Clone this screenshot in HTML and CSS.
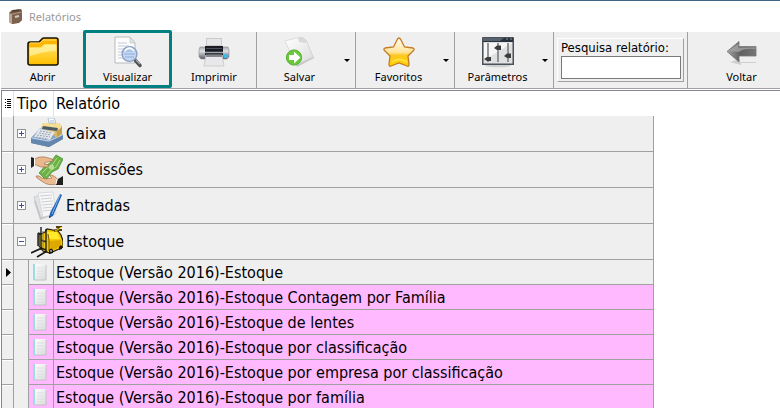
FILE: index.html
```html
<!DOCTYPE html>
<html lang="pt-BR">
<head>
<meta charset="utf-8">
<title>Relatórios</title>
<meta name="viewport" content="width=device-width, initial-scale=1">
<link rel="stylesheet" href="styles.css">
</head>
<body>
<svg class="defs" aria-hidden="true">
  <defs>
    <linearGradient id="gFolder" x1="0" y1="0" x2="0" y2="1"><stop offset="0" stop-color="#ffe36b"/><stop offset="1" stop-color="#ffc000"/></linearGradient>
    <linearGradient id="gStar" x1="0" y1="0" x2="0" y2="1"><stop offset="0" stop-color="#fffdf5"/><stop offset=".5" stop-color="#ffe59a"/><stop offset=".62" stop-color="#fdc81e"/><stop offset="1" stop-color="#ffd200"/></linearGradient>
    <linearGradient id="gPaper" x1="0" y1="0" x2="1" y2="1"><stop offset="0" stop-color="#ffffff"/><stop offset="1" stop-color="#dcdcdc"/></linearGradient>
    <linearGradient id="gMetal" x1="0" y1="0" x2="0" y2="1"><stop offset="0" stop-color="#a9abb3"/><stop offset=".35" stop-color="#dfe0e4"/><stop offset="1" stop-color="#565863"/></linearGradient>
    <linearGradient id="gArrow" x1="0" y1="0" x2="1" y2="0"><stop offset="0" stop-color="#a5a5a5"/><stop offset=".45" stop-color="#5f5f5f"/><stop offset="1" stop-color="#777"/></linearGradient>
    <linearGradient id="gTray" x1="0" y1="0" x2="0" y2="1"><stop offset="0" stop-color="#a9c6e4"/><stop offset="1" stop-color="#56799f"/></linearGradient>
    <symbol id="sheet" viewBox="0 0 14 17">
      <path d="M0 0H13V16H0Z" fill="url(#gPaper)"/><path d="M13 1V16H1" fill="none" stroke="#c0c2c4"/><path d="M1 0V16" stroke="#9fdce2" stroke-width="2"/><path d="M4 4H11M4 7H11M4 10H11M4 13H11" stroke="#dcdedf"/>
    </symbol>
  </defs>
</svg>

<header class="titlebar">
  <svg class="app-icon" viewBox="0 0 15 16" aria-hidden="true">
    <path d="M1 4L4 1L13 0L14 2V11L11 14L4 15L1 13Z" fill="#6d5445"/><path d="M4 5L14 3V11L11 13L4 15Z" fill="#7d6252"/><path d="M1 4L4 5V15L1 13Z" fill="#c0a68f"/><path d="M4 5L14 3" stroke="#b3987f"/><path d="M7 8L11 7" stroke="#d5cabd" stroke-width="2"/><path d="M5 2L11 1" stroke="#46342a"/>
  </svg>
  <h1 class="title">Relatórios</h1>
</header>

<nav class="toolbar" aria-label="Ferramentas">
  <button class="tool" type="button">
    <svg class="tool-icon" viewBox="0 0 32 32" aria-hidden="true">
      <path d="M1 7Q1 5 3 5H12L15 2Q15 1 17 1H29Q31 1 31 3V26Q31 28 29 28H3Q1 28 1 26Z" fill="#ffb400" stroke="#171300" stroke-width="1.6"/>
      <path d="M2 11Q2 10 4 10H13Q15 10 16 8Q17 7 19 7H28Q30 7 30 9V25Q30 27 28 27H4Q2 27 2 25Z" fill="url(#gFolder)"/>
      <path d="M3 11H14L18 8H29V14Q18 14 3 19Z" fill="#fff3a8" opacity=".7"/><path d="M3 6H13L16 3H29" fill="none" stroke="#ffe16b"/>
    </svg>
    <span>Abrir</span>
  </button>
  <button class="tool tool-active" type="button">
    <svg class="tool-icon" viewBox="0 0 32 32" aria-hidden="true">
      <path d="M3 0H18L23 6V26H3Z" fill="#fcfcfc" stroke="#b5b9bc"/><path d="M18 0V6H23Z" fill="#e2e5e7" stroke="#bfc3c6" stroke-width=".7"/>
      <path d="M6 6H15M6 9H17M6 12H12M6 15H10M6 18H10M6 21H12" stroke="#c3cad8"/>
      <path d="M23 23L28 28.500" stroke="#4f5359" stroke-width="3.500" stroke-linecap="round"/><path d="M24 23L28 27" stroke="#a6a9ad" stroke-width="1.2"/>
      <circle cx="17.500" cy="17" r="7.400" fill="#c3d8f4" stroke="#8a9fc0" stroke-width="1.4"/><path d="M13 14H22M12 17H23M13 20H22" stroke="#91aed6"/><path d="M13 14Q17 8 22 14" fill="none" stroke="#fff" stroke-width="1.5"/>
    </svg>
    <span>Visualizar</span>
  </button>
  <button class="tool tool-print" type="button">
    <svg class="tool-icon" viewBox="0 0 32 32" aria-hidden="true">
      <path d="M8 1H24V12H8Z" fill="#c9cacd"/><path d="M9 2H23V8H9Z" fill="#e6e6e8"/>
      <path d="M2 10H30L31 13V20L29 22H3L1 20V13Z" fill="url(#gMetal)" stroke="#8b8e96" stroke-width=".6"/>
      <path d="M7 9H25V18H7Z" fill="#1a1b22"/><path d="M8 11.500H24" stroke="#4b4d58"/><path d="M7 15.500H25" stroke="#a3a5ad" stroke-width="1.500"/><path d="M26 17H30V21H26Z" fill="#45b7e7"/>
      <path d="M8 18H24L26 29H6Z" fill="#e8e8ea" stroke="#c5c6c9" stroke-width=".8"/><path d="M8 18H24V20H8Z" fill="#84868e"/>
    </svg>
    <span>Imprimir</span>
  </button>
  <div class="split">
    <button class="tool" type="button">
      <svg class="tool-icon" viewBox="0 0 32 32" aria-hidden="true">
        <path d="M2 5L18 0L22 3L30 21L13 30Z" fill="#c4c5c5"/><path d="M1 4L16 0L22 3L29 20L12 28Z" fill="url(#gPaper)" stroke="#d2d3d3" stroke-width=".7"/><path d="M14 1L16 0L22 3V6L15 5Z" fill="#d4dade"/>
        <circle cx="10" cy="20.500" r="7.600" fill="#67c93a" stroke="#55b030"/><path d="M5 18H10V14.500L16.500 20.500L10 26.500V23H5Z" fill="#fff"/>
      </svg>
      <span>Salvar</span>
    </button>
    <button class="drop" type="button" aria-label="Opções de salvar"></button>
  </div>
  <div class="split">
    <button class="tool" type="button">
      <svg class="tool-icon" viewBox="0 0 32 32" aria-hidden="true">
        <path d="M16 1Q17 1 18 3L21.500 10L30 11Q32 12 30.500 13.500L25 19L26 27Q26 30 24 29L16 26L8 29Q6 30 6 27L7 19L1.500 13.500Q0 12 2 11L10.500 10L14 3Q15 1 16 1Z" fill="url(#gStar)" stroke="#c47a24" stroke-width="1.300"/>
        <path d="M9 25Q16 20 24 25" fill="none" stroke="#ffe94c" stroke-width="1.500"/>
      </svg>
      <span>Favoritos</span>
    </button>
    <button class="drop" type="button" aria-label="Opções de favoritos"></button>
  </div>
  <div class="split">
    <button class="tool" type="button">
      <svg class="tool-icon" viewBox="0 0 32 32" aria-hidden="true">
        <ellipse cx="16" cy="28.500" rx="13" ry="1.800" fill="#cfcfcf"/>
        <path d="M0 1Q0 0 1 0H31Q32 0 32 1V28H0Z" fill="#4b5159"/><path d="M1.500 5H30.500V26.500H1.500Z" fill="#dfe0e2"/><path d="M2 6H30L2 23Z" fill="#f6f6f6"/><path d="M1 1H31V5H1Z" fill="#29323c"/><path d="M1 1H22L18 4H1Z" fill="#58636f"/><path d="M24 2H26M28 2H30" stroke="#8c96a0"/>
        <path d="M6 6V25M16 6V25M26 6V25" stroke="#777" stroke-width="1.500"/><path d="M2 22L5 20H9V24H5ZM12 11L15 8.500H19V13H15ZM22 19L25 16.500H29V21H25Z" fill="#3d3d3d"/>
      </svg>
      <span>Parâmetros</span>
    </button>
    <button class="drop" type="button" aria-label="Opções de parâmetros"></button>
  </div>
  <div class="search">
    <div class="search-frame">
      <label for="pesquisa">Pesquisa relatório:</label>
      <input id="pesquisa" type="text">
    </div>
  </div>
  <button class="tool tool-back" type="button">
    <svg class="tool-icon" viewBox="0 0 32 32" aria-hidden="true">
      <path d="M4 25L14 22V25H30V26H15V28Z" fill="#cfcfcf"/>
      <path d="M1 14.500L13 4.500V9.500H30V19H13V25Z" fill="url(#gArrow)" stroke="#777" stroke-width=".8"/><path d="M3 14L12.500 6.500V10.500H29.500V12Q18 11 13 15Z" fill="#aaa" opacity=".7"/>
    </svg>
    <span>Voltar</span>
  </button>
</nav>

<main class="grid">
  <table class="reports">
    <colgroup><col class="c-mark"><col class="c-indent"><col class="c-type"><col class="c-name"></colgroup>
    <thead>
      <tr>
        <th class="corner"><svg width="8" height="10" viewBox="0 0 8 10" role="img" aria-label="Colunas"><path d="M1 .5H2M1 3.500H2M1 6.500H2M1 8.500H2M3 .5H7M3 2.500H7M3 4.500H7M3 6.500H7M3 8.500H7" stroke="#000"/></svg></th>
        <th class="type-head" colspan="2">Tipo</th>
        <th class="name-head">Relatório</th>
      </tr>
    </thead>
    <tbody>
      <tr class="group">
        <td class="mark"></td>
        <td class="group-cell" colspan="3"><div class="group-line">
          <button class="expander" type="button" aria-label="Expandir Caixa"></button>
          <svg class="group-icon" viewBox="0 0 32 32" aria-hidden="true">
            <path d="M0 20L9 10L31 14L32 21L18 29L0 25Z" fill="url(#gTray)"/><path d="M0 21L18 24L32 17V21L18 29L0 25Z" fill="#6486ad"/><path d="M1 20L18 23L31 17" fill="none" stroke="#c4d9ee"/>
            <path d="M10 10L12 5L28 5L31 8V16L25 20L21 14Z" fill="#d8b867"/><path d="M12 5L28 5L31 8L28 12L10 9Z" fill="#f3dd97"/><path d="M12 8L27 10L26 13L11 11Z" fill="#4c5a66"/><path d="M26 13L31 9V15L26 19Z" fill="#c49f4b"/>
            <path d="M8 11L24 14L19 22L3 19Z" fill="#e3e6ea"/><path d="M9 13L21 15M8 15L20 17M6 17L19 19M5 19L17 21" stroke="#97a5b4" stroke-dasharray="2 1"/>
            <path d="M17 0L23 0L25 5L18 5Z" fill="#fafcff" stroke="#a5b4c5" stroke-width=".8"/><path d="M19 3H23" stroke="#a9bed5"/>
          </svg>
          <span>Caixa</span></div></td>
      </tr>
      <tr class="group">
        <td class="mark"></td>
        <td class="group-cell" colspan="3"><div class="group-line">
          <button class="expander" type="button" aria-label="Expandir Comissões"></button>
          <svg class="group-icon" viewBox="0 0 32 32" aria-hidden="true">
            <path d="M8 19L14 12L19 9L25 1L32 5L27 15L21 18L15 26Z" fill="#6cb247" stroke="#4a9433" stroke-width=".8"/><path d="M11 19L16 14L21 11L26 4M15 22L20 16L25 13L29 6" fill="none" stroke="#afd98d"/><circle cx="20.500" cy="13" r="2.600" fill="#b6dd95"/>
            <path d="M3 5Q9 2 14 3L21 5L22 7L16 8L13 10L18 11L17 13L10 13L5 11L3 10Z" fill="#e9b98e" stroke="#a4714c" stroke-width=".7"/><path d="M0 3L3 4V12L0 14Z" fill="#202020"/><path d="M3.500 4V12" stroke="#fff"/>
            <path d="M5 22Q8 21 11 24L15 25L21 24L18 21Q24 21 27 26L26 30Q17 32 12 28L6 24Z" fill="#ebbb92" stroke="#a4714c" stroke-width=".7"/><path d="M27 25L32 22V31H25Z" fill="#202020"/><path d="M26 25L25 30" stroke="#fff"/>
          </svg>
          <span>Comissões</span></div></td>
      </tr>
      <tr class="group">
        <td class="mark"></td>
        <td class="group-cell" colspan="3"><div class="group-line">
          <button class="expander" type="button" aria-label="Expandir Entradas"></button>
          <svg class="group-icon" viewBox="0 0 32 32" aria-hidden="true">
            <path d="M3 11L12 5L22 25L9 30Z" fill="#c2c4c7"/><path d="M3 7L15 3L22 25L10 28Z" fill="#e2e3e4" stroke="#b8bbbf" stroke-width=".6"/><path d="M7 3L22 2L25 24L12 27Z" fill="#f7f7f7" stroke="#c9cbce" stroke-width=".6"/>
            <path d="M9 6L21 5M10 9L21 8M10 12L22 11M11 15L22 14M12 18L22 17M12 21L21 20" stroke="#cdd0d3"/>
            <path d="M29 4L31 5L22 26L18 28L19 23Z" fill="#2763b5"/><path d="M29 5L21 24" stroke="#79b0ed"/><path d="M18 26L18 28L20 27Z" fill="#1c2a42"/>
          </svg>
          <span>Entradas</span></div></td>
      </tr>
      <tr class="group">
        <td class="mark"></td>
        <td class="group-cell" colspan="3"><div class="group-line">
          <button class="expander open" type="button" aria-label="Recolher Estoque"></button>
          <svg class="group-icon" viewBox="0 0 32 32" aria-hidden="true">
            <path d="M8 9L14 6L16 3L27 5L30 9L32 15V21L28 23L19 27L12 25L8 20Z" fill="#f5cb00" stroke="#211b00" stroke-width="1.200"/><path d="M16 6L26 6L29 13L18 13Z" fill="#ffe92a"/><path d="M18 15L30 14V20L20 25Z" fill="#dda900"/><path d="M17 8L18 14V25" fill="none" stroke="#785700"/>
            <path d="M23 5L28 3M25 1L31 0M28 1V4H31" fill="none" stroke="#554000" stroke-width="2.200"/><path d="M24 5L28 3L30 1" fill="none" stroke="#f4c900"/>
            <path d="M10 1V24M15 3V26M7 7V20M7 7L10 8M10 14L15 16M10 22L15 24" fill="none" stroke="#202020" stroke-width="1.400"/><path d="M12 5V22" stroke="#777"/>
            <path d="M11 22L0 27M16 25L6 31" stroke="#181818" stroke-width="1.700"/><path d="M18 24Q20 21 22 24V27L18 28ZM28 21Q30 18 31 20V23L28 24Z" fill="#171717"/><circle cx="20" cy="25" r="1" fill="#aaa"/>
          </svg>
          <span>Estoque</span></div></td>
      </tr>
      <tr class="report selected"><td class="mark"><svg class="pointer" viewBox="0 0 5 9" role="img" aria-label="Linha atual"><path d="M0 0L5 4.500L0 9Z"/></svg></td><td class="indent"></td><td class="type"><svg class="doc" aria-hidden="true"><use href="#sheet"/></svg></td><td class="name">Estoque (Versão 2016)-Estoque</td></tr>
      <tr class="report"><td class="mark"></td><td class="indent"></td><td class="type"><svg class="doc" aria-hidden="true"><use href="#sheet"/></svg></td><td class="name">Estoque (Versão 2016)-Estoque Contagem por Família</td></tr>
      <tr class="report"><td class="mark"></td><td class="indent"></td><td class="type"><svg class="doc" aria-hidden="true"><use href="#sheet"/></svg></td><td class="name">Estoque (Versão 2016)-Estoque de lentes</td></tr>
      <tr class="report"><td class="mark"></td><td class="indent"></td><td class="type"><svg class="doc" aria-hidden="true"><use href="#sheet"/></svg></td><td class="name">Estoque (Versão 2016)-Estoque por classificação</td></tr>
      <tr class="report"><td class="mark"></td><td class="indent"></td><td class="type"><svg class="doc" aria-hidden="true"><use href="#sheet"/></svg></td><td class="name">Estoque (Versão 2016)-Estoque por empresa por classificação</td></tr>
      <tr class="report"><td class="mark"></td><td class="indent"></td><td class="type"><svg class="doc" aria-hidden="true"><use href="#sheet"/></svg></td><td class="name">Estoque (Versão 2016)-Estoque por família</td></tr>
    </tbody>
  </table>
</main>
</body>
</html>
```
FILE: styles.css
```css
* { box-sizing: border-box; }

body {
  margin: 0;
  height: 100vh;
  overflow: hidden;
  display: flex;
  flex-direction: column;
  background: #fff;
  color: #000;
  font-family: Tahoma, "DejaVu Sans Condensed", sans-serif;
  font-size: 16px;
}

button { border: 0; padding: 0; background: none; color: inherit; font: inherit; }

.defs { position: absolute; width: 0; height: 0; }

.titlebar {
  flex: none;
  display: flex;
  align-items: center;
  gap: 6px;
  height: 32px;
  padding-left: 8px;
  border-top: 1px solid #3f6589;
}
.app-icon { width: 15px; height: 16px; }
.title {
  margin: 0;
  color: #999;
  font: 400 11px/16px "Segoe UI", "Noto Sans", sans-serif;
}

.toolbar {
  flex: none;
  display: flex;
  height: 57px;
  margin-left: 1px;
  background: #efefef;
  border-bottom: 1px solid #a0a0a0;
  font: 11px/16px "Segoe UI", "Noto Sans", sans-serif;
}
.tool {
  flex: none;
  display: flex;
  flex-direction: column;
  align-items: center;
  width: 83px;
  padding-top: 5px;
}
.tool-icon { width: 32px; height: 32px; flex: none; overflow: visible; }
.tool-active {
  width: 89px;
  height: 58px;
  margin: -2px 0 0 -1px;
  padding-top: 4px;
  border: 3px solid #008080;
  border-radius: 2px;
}
.tool-print { width: 84px; }
.split {
  flex: none;
  display: flex;
  width: 99px;
  border-left: 1px solid #a0a0a0;
}
.split .tool { width: 85px; }
.drop { flex: 1; display: grid; place-items: center; }
.drop::after {
  content: "";
  margin-right: 4px;
  border: 3px solid transparent;
  border-top-color: #000;
  border-bottom: 0;
}
.search {
  flex: none;
  width: 135px;
  padding: 6px 3px;
  border: 1px solid #a0a0a0;
  border-width: 0 1px;
}
.search-frame {
  display: flex;
  flex-direction: column;
  height: 44px;
  padding: 1px 2px 2px 3px;
  border: 1px solid;
  border-color: #fff #a0a0a0 #a0a0a0 #fff;
  font: 13px/16px Tahoma, "DejaVu Sans Condensed", sans-serif;
}
.search input {
  width: 100%;
  height: 24px;
  padding: 0 3px;
  border: 1px solid #7a7a7a;
  background: #fff;
  font: inherit;
}
.tool-back { margin-left: 12px; }

.grid {
  flex: 1;
  min-height: 0;
  margin: 1px 0 0 1px;
  overflow: hidden;
  border: solid #828790;
  border-width: 1px 0 0 1px;
}
.reports { table-layout: fixed; border-collapse: separate; border-spacing: 0; width: 652px; }
.c-mark { width: 12px; }
.c-indent { width: 15px; }
.c-type { width: 25px; }
.reports th, .reports td { padding: 0; }
.reports th { height: 25px; font-weight: 400; text-align: left; border-right: 1px solid #e2e2e2; }
.reports .name-head { padding-left: 2px; border-right: 0; }
.reports .type-head { padding-left: 3px; }
.corner svg { display: block; margin: 0 auto; }

.mark { background: #efefef; border: solid #a0a0a0; border-width: 0 1px 1px 0; box-shadow: inset 0 1px #fff; }
.mark svg { display: block; }
.group td { height: 36px; }
.group-cell { background: #efefef; border: solid #a0a0a0; border-width: 0 1px 1px 0; }
.group-line { display: flex; align-items: center; padding-left: 3px; }
.group-icon { width: 32px; height: 32px; margin: 0 3px 0 5px; }
.expander {
  width: 9px;
  height: 9px;
  border: 1px solid #919191;
  background:
    linear-gradient(#3c50a0, #3c50a0) center / 5px 1px no-repeat,
    linear-gradient(#3c50a0, #3c50a0) center / 1px 5px no-repeat,
    #fff;
}
.expander.open { background: linear-gradient(#3c50a0, #3c50a0) center / 5px 1px no-repeat, #fff; }

.report td { height: 25px; }
.indent { background: #efefef; border-right: 1px solid #a0a0a0; }
.type, .name { background: #ffb9ff; border: solid #a0a0a0; border-width: 0 1px 1px 0; }
.selected .type, .selected .name { background: #efefef; }
.reports .name { padding-left: 2px; white-space: nowrap; }
.doc { display: block; width: 14px; height: 17px; margin: 0 0 0 4px; }
.pointer { width: 5px; height: 9px; margin: 0 0 0 4px; }
```
